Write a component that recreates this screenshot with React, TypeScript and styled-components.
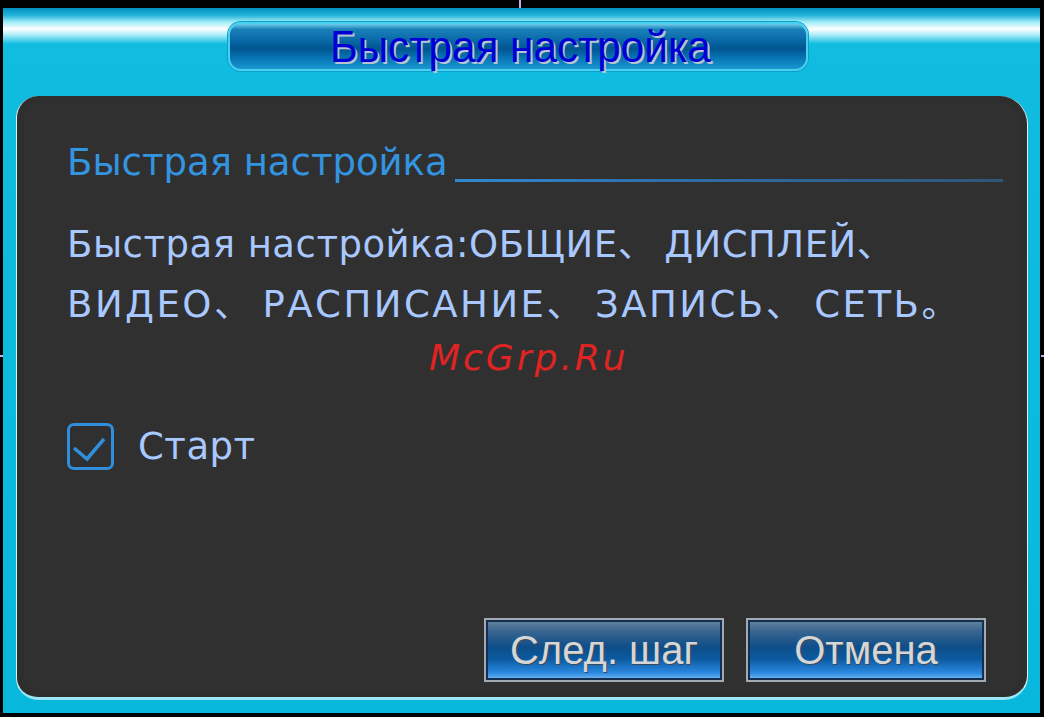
import React from 'react'
import styled, { createGlobalStyle } from 'styled-components'

const GlobalStyle = createGlobalStyle`
    html, body {
        margin: 0;
        padding: 0;
        background: #000;
    }
`

const Screen = styled.div`
    position: relative;
    width: 1044px;
    height: 717px;
    box-sizing: border-box;
    padding: 8px 4px 4px 3px;
    background: #000;
    overflow: hidden;
`

const Frame = styled.div`
    height: 100%;
    box-sizing: border-box;
    display: flex;
    flex-direction: column;
    padding: 14px 0 13px 0;
    background: linear-gradient(
        to bottom,
        #0090c0 0px,
        #20b0d8 7px,
        #a0ecf8 14px,
        #ffffff 21px,
        #a8ecf8 27px,
        #10bce0 36px,
        #08b8dc 100%
    );
`

const TitleBar = styled.div`
    margin-left: 225px;
    width: 580px;
    height: 49px;
    box-sizing: border-box;
    display: flex;
    align-items: center;
    justify-content: center;
    border: 2px solid #48d0ee;
    border-radius: 13px;
    background: linear-gradient(
        to bottom,
        #6ccaea 0%,
        #1a80b8 12%,
        #0a6aa8 35%,
        #005690 55%,
        #0a78b8 78%,
        #1898d0 100%
    );
    box-shadow: 0 0 0 1px #0aa0cc;
`

const TitleText = styled.span`
    display: inline-block;
    font-family: 'Liberation Sans', Arial, sans-serif;
    font-size: 44px;
    line-height: 46px;
    color: #0000d4;
    text-shadow: 2px 2px 0 #b8c4d4;
    transform: scaleX(0.96);
    margin-left: 4px;
`

const Panel = styled.div`
    flex: 1;
    margin: 25px 12px 0 13px;
    display: flex;
    flex-direction: column;
    box-sizing: border-box;
    padding: 47px 41px 15px 50px;
    background: #303030;
    border-radius: 22px 28px 24px 22px;
    border-left: 1px solid #d8f4fa;
    border-right: 1px solid #d8f4fa;
    border-bottom: 3px solid #9ae6f6;
    box-shadow: inset 0 0 0 7px #2e2e2e;
`

const Header = styled.div`
    display: flex;
    align-items: flex-end;
    margin-right: -17px;
`

const HeaderText = styled.span`
    font-family: 'DejaVu Sans', Verdana, sans-serif;
    font-size: 37px;
    line-height: 40px;
    color: #3394e0;
    white-space: nowrap;
`

const HeaderLine = styled.div`
    flex: 1;
    height: 3px;
    margin: 0 0 1px 7px;
    background: linear-gradient(to right, #3288d0 0%, #2f6ea8 40%, #2f5678 100%);
`

const Body = styled.div`
    margin-top: 32px;
    font-family: 'DejaVu Sans', Verdana, 'Noto Sans CJK SC', sans-serif;
    font-size: 37px;
    line-height: 60px;
    color: #a8c8ff;
    white-space: nowrap;
`

const Line = styled.div<{ $spacing: number }>`
    height: 60px;
    letter-spacing: ${(p) => p.$spacing}px;
`

const Punct = styled.span`
    font-family: 'Noto Sans CJK SC', sans-serif;
    line-height: 0;
    margin-right: 9px;
`

const CheckRow = styled.label`
    display: flex;
    align-items: center;
    gap: 24px;
    margin-top: 88px;
`

const Box = styled.div`
    width: 47px;
    height: 47px;
    box-sizing: border-box;
    border: 3px solid #2f8fdc;
    border-radius: 7px;
    display: flex;
    align-items: center;
    justify-content: center;
`

const CheckLabel = styled.span`
    font-family: 'DejaVu Sans', Verdana, sans-serif;
    font-size: 37px;
    line-height: 47px;
    letter-spacing: 0.5px;
    color: #a8c8ff;
`

const Spacer = styled.div`
    flex: 1;
`

const Buttons = styled.div`
    display: flex;
    justify-content: flex-end;
    gap: 22px;
`

const Button = styled.button`
    width: 240px;
    height: 64px;
    box-sizing: border-box;
    padding: 0;
    border: 2px solid #a2aab4;
    box-shadow: inset 0 0 0 2px #14304e;
    background: linear-gradient(
        to bottom,
        #6a86a0 0%,
        #3a6690 18%,
        #0e4e88 45%,
        #0c5aa0 65%,
        #2a88e0 88%,
        #7cc0f4 100%
    );
    font-family: 'Liberation Sans', Arial, sans-serif;
    font-size: 40px;
    color: #d6d6d6;
    text-shadow: 1px 1px 0 #3a4a5a;
`

const Watermark = styled.div`
    position: absolute;
    left: 429px;
    top: 336px;
    font-family: 'DejaVu Sans', Verdana, sans-serif;
    font-size: 36px;
    font-style: italic;
    letter-spacing: 3px;
    line-height: 44px;
    color: #e02424;
    pointer-events: none;
`

const Tick = styled.div<{ $vertical?: boolean }>`
    position: absolute;
    background: #c8a8e8;
    width: ${(p) => (p.$vertical ? '2px' : '3px')};
    height: ${(p) => (p.$vertical ? '8px' : '2px')};
`

export default function App() {
    return (
        <>
            <GlobalStyle />
            <Screen>
                <Frame>
                    <TitleBar>
                        <TitleText>Быстрая настройка</TitleText>
                    </TitleBar>
                    <Panel>
                        <Header>
                            <HeaderText>Быстрая настройка</HeaderText>
                            <HeaderLine />
                        </Header>
                        <Body>
                            <Line $spacing={0.5}>
                                Быстрая настройка:ОБЩИЕ<Punct>、</Punct>ДИСПЛЕЙ<Punct>、</Punct>
                            </Line>
                            <Line $spacing={2.5}>
                                ВИДЕО<Punct>、</Punct>РАСПИСАНИЕ<Punct>、</Punct>ЗАПИСЬ
                                <Punct>、</Punct>СЕТЬ<Punct>。</Punct>
                            </Line>
                        </Body>
                        <CheckRow>
                            <Box>
                                <svg width="41" height="41" viewBox="0 0 41 41">
                                    <polyline
                                        points="4,22 17,33 34,13"
                                        fill="none"
                                        stroke="#2f8fdc"
                                        strokeWidth="3.5"
                                    />
                                </svg>
                            </Box>
                            <CheckLabel>Старт</CheckLabel>
                        </CheckRow>
                        <Spacer />
                        <Buttons>
                            <Button>След. шаг</Button>
                            <Button>Отмена</Button>
                        </Buttons>
                    </Panel>
                </Frame>
                <Watermark>McGrp.Ru</Watermark>
                <Tick $vertical style={{ left: 519, top: 0 }} />
                <Tick style={{ left: 0, top: 355 }} />
                <Tick style={{ left: 1041, top: 355 }} />
            </Screen>
        </>
    )
}
